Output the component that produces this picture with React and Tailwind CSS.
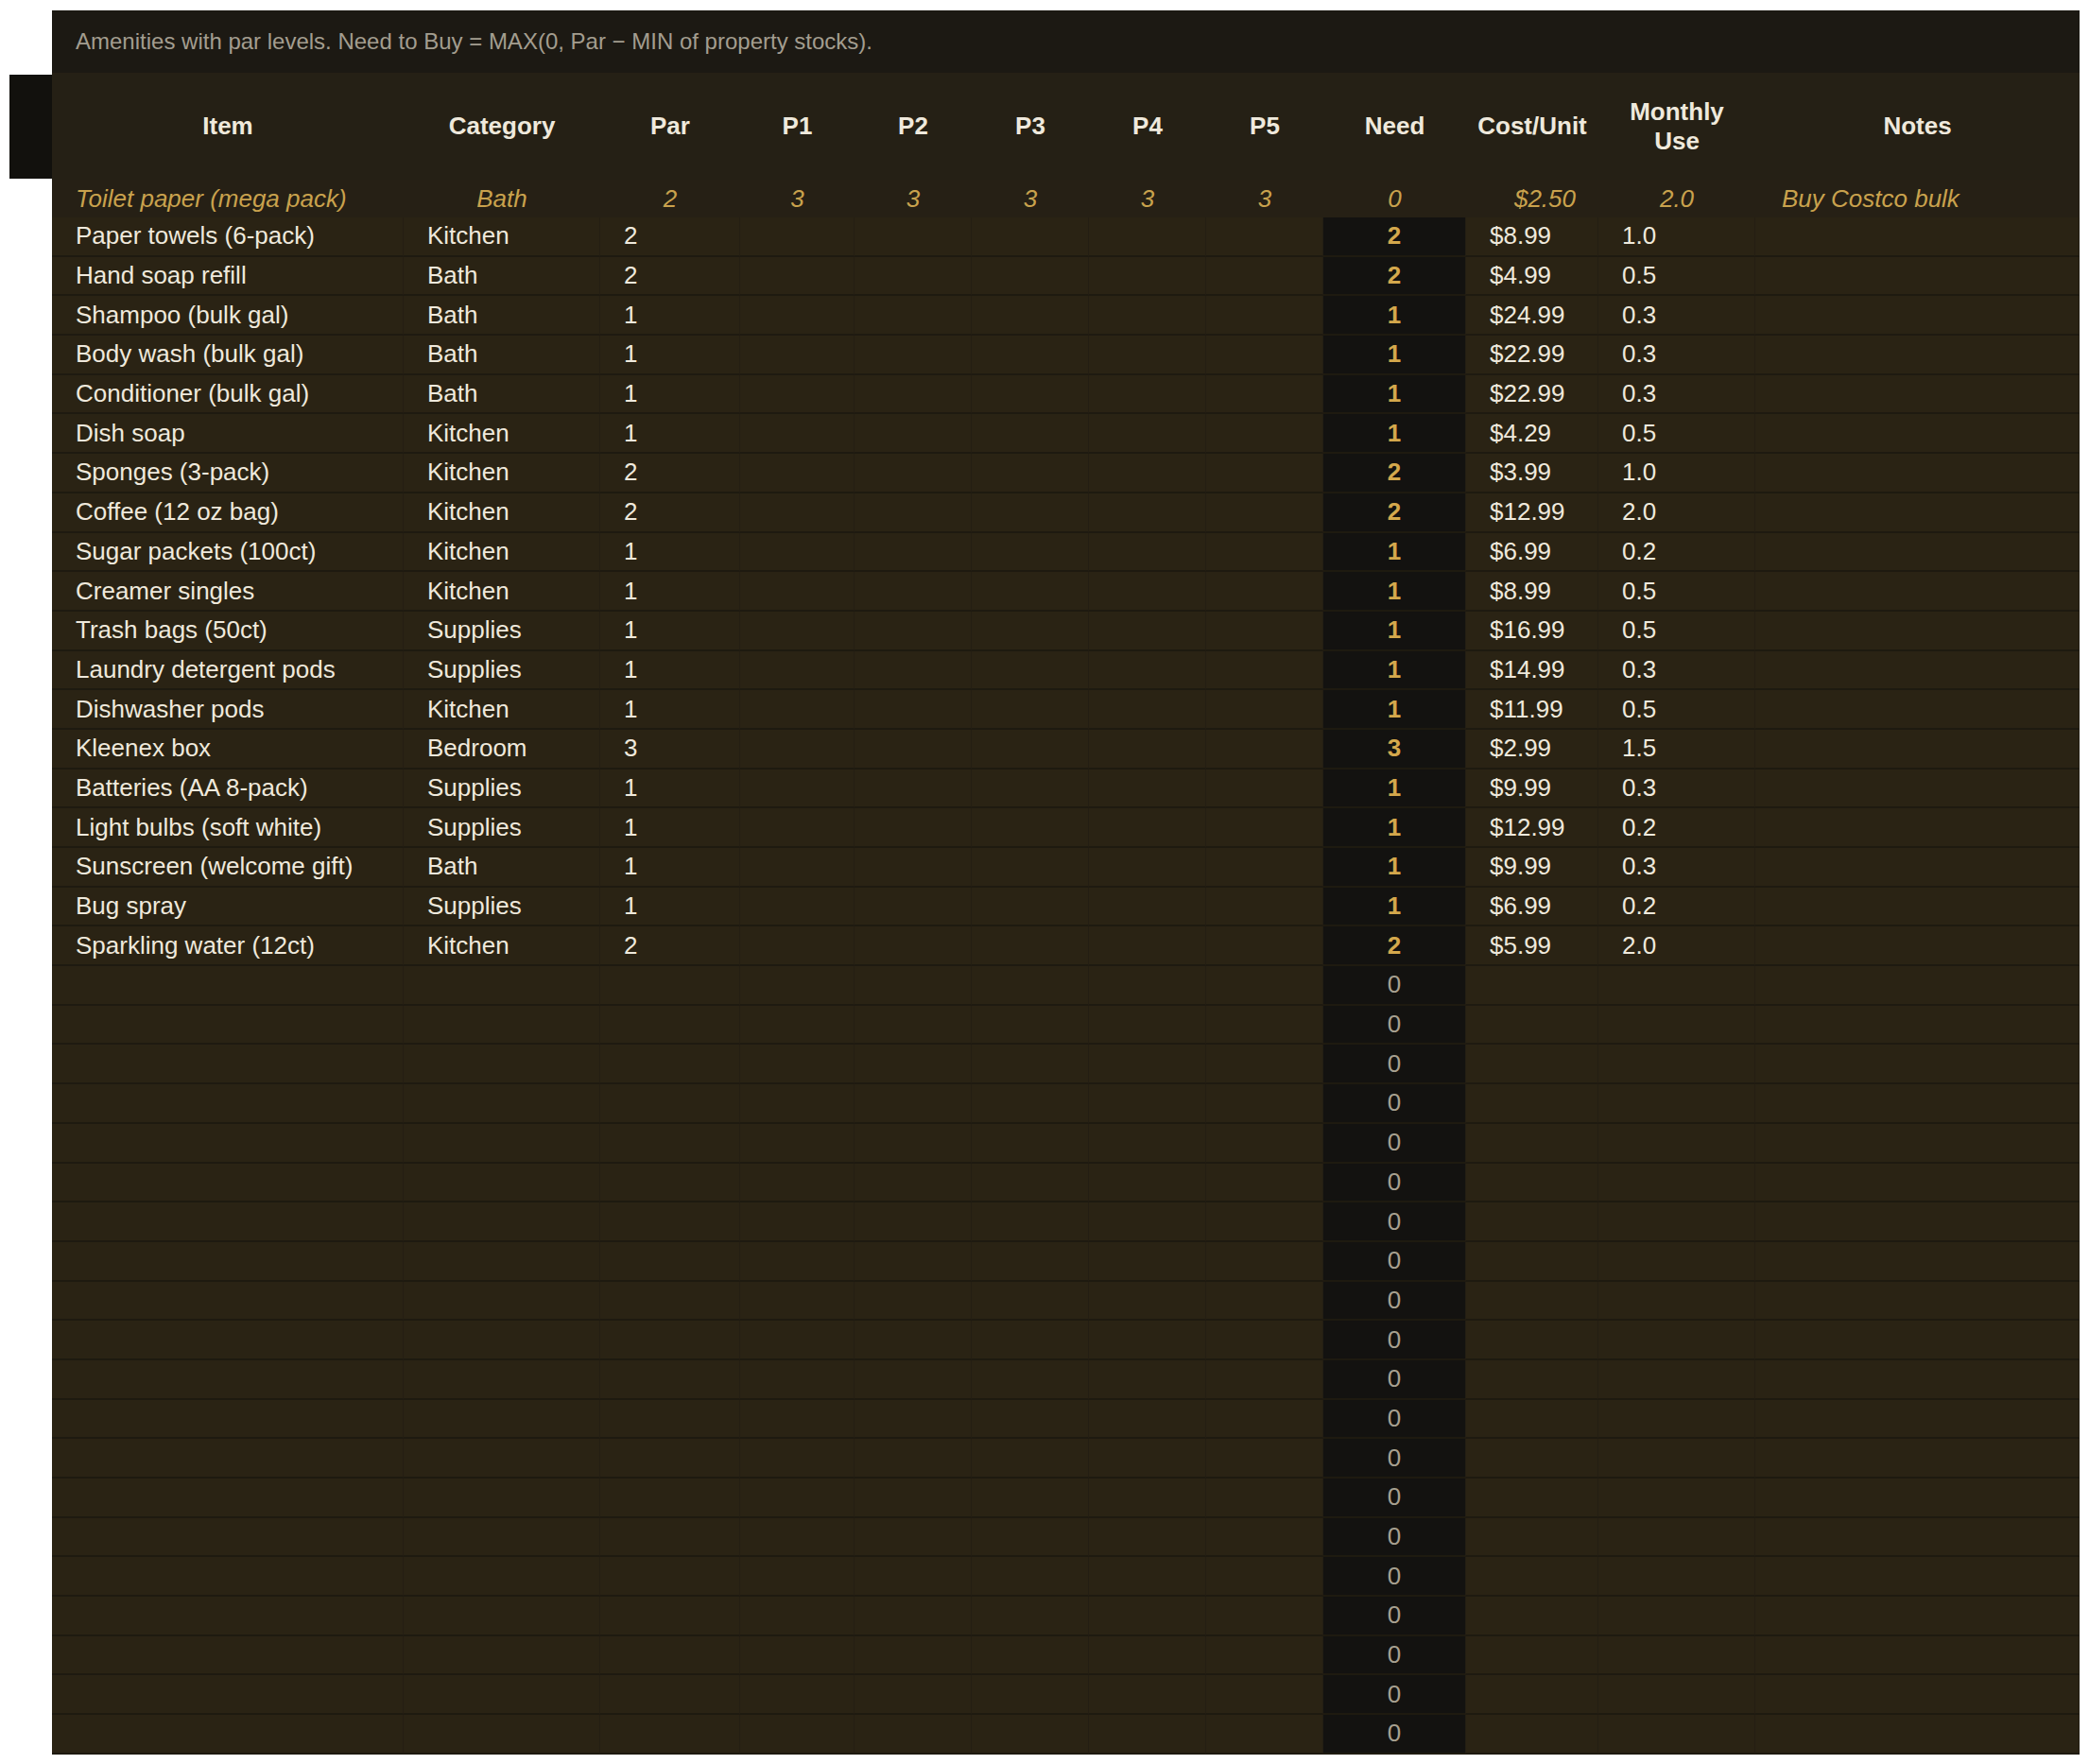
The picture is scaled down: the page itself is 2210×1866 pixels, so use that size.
const cols = "grid grid-cols-[372px_208px_148px_121px_124px_124px_124px_124px_151px_140px_166px_343px]";

const rows = [
  ["Paper towels (6-pack)", "Kitchen", "2", "$8.99", "1.0"],
  ["Hand soap refill", "Bath", "2", "$4.99", "0.5"],
  ["Shampoo (bulk gal)", "Bath", "1", "$24.99", "0.3"],
  ["Body wash (bulk gal)", "Bath", "1", "$22.99", "0.3"],
  ["Conditioner (bulk gal)", "Bath", "1", "$22.99", "0.3"],
  ["Dish soap", "Kitchen", "1", "$4.29", "0.5"],
  ["Sponges (3-pack)", "Kitchen", "2", "$3.99", "1.0"],
  ["Coffee (12 oz bag)", "Kitchen", "2", "$12.99", "2.0"],
  ["Sugar packets (100ct)", "Kitchen", "1", "$6.99", "0.2"],
  ["Creamer singles", "Kitchen", "1", "$8.99", "0.5"],
  ["Trash bags (50ct)", "Supplies", "1", "$16.99", "0.5"],
  ["Laundry detergent pods", "Supplies", "1", "$14.99", "0.3"],
  ["Dishwasher pods", "Kitchen", "1", "$11.99", "0.5"],
  ["Kleenex box", "Bedroom", "3", "$2.99", "1.5"],
  ["Batteries (AA 8-pack)", "Supplies", "1", "$9.99", "0.3"],
  ["Light bulbs (soft white)", "Supplies", "1", "$12.99", "0.2"],
  ["Sunscreen (welcome gift)", "Bath", "1", "$9.99", "0.3"],
  ["Bug spray", "Supplies", "1", "$6.99", "0.2"],
  ["Sparkling water (12ct)", "Kitchen", "2", "$5.99", "2.0"],
];

const headers = ["Item", "Category", "Par", "P1", "P2", "P3", "P4", "P5", "Need", "Cost/Unit", "Monthly Use", "Notes"];
const example = ["Toilet paper (mega pack)", "Bath", "2", "3", "3", "3", "3", "3", "0", "$2.50", "2.0", "Buy Costco bulk"];

const Cell = ({ children, className = "" }) => (
  <div className={`h-[41.7px] flex items-center px-[25px] border-b-2 border-r border-b-[#1e1a10] border-r-[#241e13] ${className}`}>
    {children}
  </div>
);

export default function App() {
  const empty = Array.from({ length: 20 });
  return (
    <div className="bg-white min-h-[1866px] w-[2210px] pt-[11px] pl-[55px] relative font-[family-name:Liberation_Sans,Arial,sans-serif] text-[26px] text-[#efe9dc]">
      <div className="absolute left-[10px] top-[79px] w-[45px] h-[110px] bg-[#12110d]" />
      <div className="w-[2145px] bg-[#2a2314]">
        <div className="h-[66px] bg-[#1c1913] flex items-center pl-[25px] text-[24px] text-[#a39d8f]">
          Amenities with par levels. Need to Buy = MAX(0, Par − MIN of property stocks).
        </div>
        <div className={`${cols} h-[113px] bg-[#252015] font-bold`}>
          {headers.map((h) => (
            <div key={h} className="flex items-center justify-center text-center leading-[31px] px-1">
              {h === "Monthly Use" ? <span>Monthly<br />Use</span> : h}
            </div>
          ))}
        </div>
        <div className={`${cols} h-[40px] bg-[#262015] italic text-[#c9a24d]`}>
          {example.map((v, i) => (
            <div
              key={i}
              className={`flex items-center ${i === 0 ? "justify-start pl-[25px]" : i === 11 ? "justify-start pl-[28px]" : i === 9 ? "justify-end pr-[24px]" : "justify-center"}`}
            >
              {v}
            </div>
          ))}
        </div>
        {rows.map((r) => (
          <div key={r[0]} className={cols}>
            <Cell>{r[0]}</Cell>
            <Cell>{r[1]}</Cell>
            <Cell>{r[2]}</Cell>
            <Cell /><Cell /><Cell /><Cell /><Cell />
            <Cell className="justify-center bg-[#131210] font-bold text-[#d4a84c]">{r[2]}</Cell>
            <Cell className="px-[22px]">{r[3]}</Cell>
            <Cell className="px-[22px]">{r[4]}</Cell>
            <Cell />
          </div>
        ))}
        {empty.map((_, i) => (
          <div key={i} className={cols}>
            <Cell /><Cell /><Cell /><Cell /><Cell /><Cell /><Cell /><Cell />
            <Cell className="justify-center bg-[#131210] text-[#a8a090]">0</Cell>
            <Cell /><Cell /><Cell />
          </div>
        ))}
      </div>
    </div>
  );
}
